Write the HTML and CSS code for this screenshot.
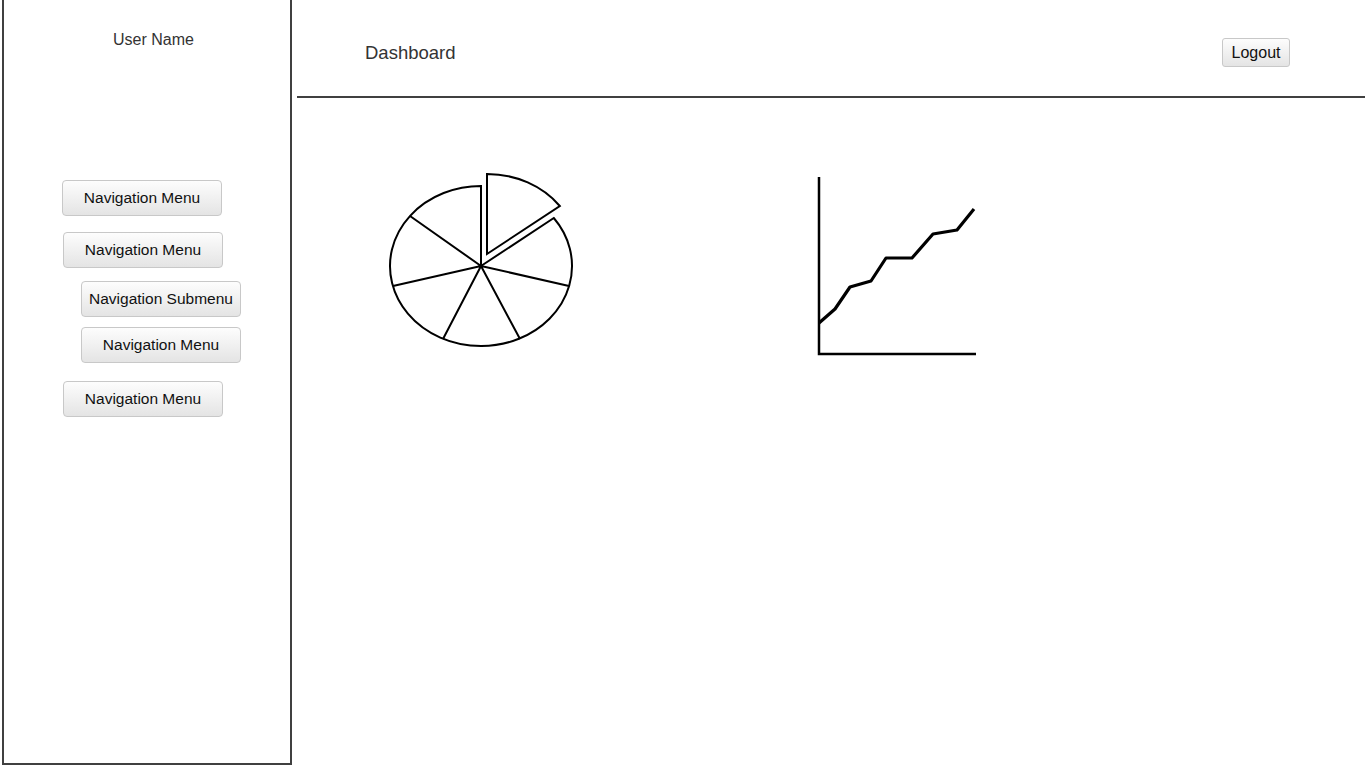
FILE: index.html
```html
<!DOCTYPE html>
<html>
<head>
<meta charset="utf-8">
<title>Dashboard</title>
<link rel="stylesheet" href="styles.css">
</head>
<body>
<div class="app">
  <aside class="sidebar">
    <div class="user-name">User Name</div>
    <nav class="nav">
      <button class="nav-btn nav-1">Navigation Menu</button>
      <button class="nav-btn nav-2">Navigation Menu</button>
      <button class="nav-btn nav-sub nav-3">Navigation Submenu</button>
      <button class="nav-btn nav-sub nav-4">Navigation Menu</button>
      <button class="nav-btn nav-5">Navigation Menu</button>
    </nav>
  </aside>
  <main class="main">
    <header class="header">
      <h1 class="title">Dashboard</h1>
      <button class="logout">Logout</button>
    </header>
    <section class="charts">
      <svg class="pie" width="200" height="190" viewBox="0 0 200 190">
        <g fill="#fff" stroke="#000" stroke-width="2" stroke-linejoin="miter">
          <path d="M101,98 L101,18 A91,80 0 1,0 173.8,50 Z"/>
          <path d="M101,98 L30,48 M101,98 L13,118 M101,98 L63,171 M101,98 L140,171 M101,98 L189,118"/>
          <path d="M107,6 A91,80 0 0,1 179.8,38 L107,86 Z"/>
        </g>
      </svg>
      <svg class="line-chart" width="175" height="190" viewBox="0 0 175 190">
        <path d="M9,7 L9,184 L166,184" fill="none" stroke="#000" stroke-width="2.5"/>
        <polyline points="9,153 25,139 40,117 61,111 76,88 102,88 123,64 147,60 164,39" fill="none" stroke="#000" stroke-width="3.2" stroke-linejoin="round"/>
      </svg>
    </section>
  </main>
</div>
</body>
</html>
```

FILE: styles.css
```css
html, body {
  margin: 0;
  padding: 0;
  background: #fff;
  font-family: "Liberation Sans", Arial, sans-serif;
  overflow: hidden;
}

.app {
  display: flex;
  width: 1365px;
  height: 765px;
}

.sidebar {
  box-sizing: border-box;
  width: 290px;
  height: 765px;
  margin-left: 2px;
  border: 2px solid #404040;
  border-top: none;
  display: flex;
  flex-direction: column;
}

.user-name {
  margin-top: 31px;
  padding-left: 13px;
  text-align: center;
  font-size: 16px;
  line-height: 18px;
  color: #333;
}

.nav {
  display: flex;
  flex-direction: column;
  align-items: flex-start;
  margin-top: 131px;
}

.nav-btn {
  box-sizing: border-box;
  width: 160px;
  height: 36px;
  padding: 0;
  margin-left: 59px;
  border: 1px solid #c8c8c8;
  border-radius: 4px;
  background: linear-gradient(#fdfdfd, #e4e4e4);
  font-family: "Liberation Sans", Arial, sans-serif;
  font-size: 15.5px;
  color: #111;
  text-align: center;
}

.nav-1 { margin-left: 58px; }
.nav-2 { margin-top: 16px; }
.nav-3 { margin-top: 13px; }
.nav-4 { margin-top: 10px; }
.nav-5 { margin-top: 18px; }
.nav-sub { margin-left: 77px; }

.main {
  flex: 1;
  display: flex;
  flex-direction: column;
}

.header {
  box-sizing: border-box;
  height: 98px;
  margin-left: 5px;
  border-bottom: 2px solid #404040;
  display: flex;
  align-items: flex-start;
  justify-content: space-between;
  padding: 0 75px 0 68px;
}

.title {
  margin: 42px 0 0 0;
  font-size: 18.5px;
  line-height: 22px;
  font-weight: normal;
  color: #333;
}

.logout {
  box-sizing: border-box;
  margin-top: 38px;
  width: 68px;
  height: 29px;
  padding: 0;
  border: 1px solid #c8c8c8;
  border-radius: 3px;
  background: linear-gradient(#fdfdfd, #e4e4e4);
  font-family: "Liberation Sans", Arial, sans-serif;
  font-size: 16px;
  color: #111;
}

.charts {
  display: flex;
  align-items: flex-start;
  padding: 70px 0 0 88px;
}

.pie {
  display: block;
}

.line-chart {
  display: block;
  margin-left: 230px;
  margin-top: 2px;
}
```
